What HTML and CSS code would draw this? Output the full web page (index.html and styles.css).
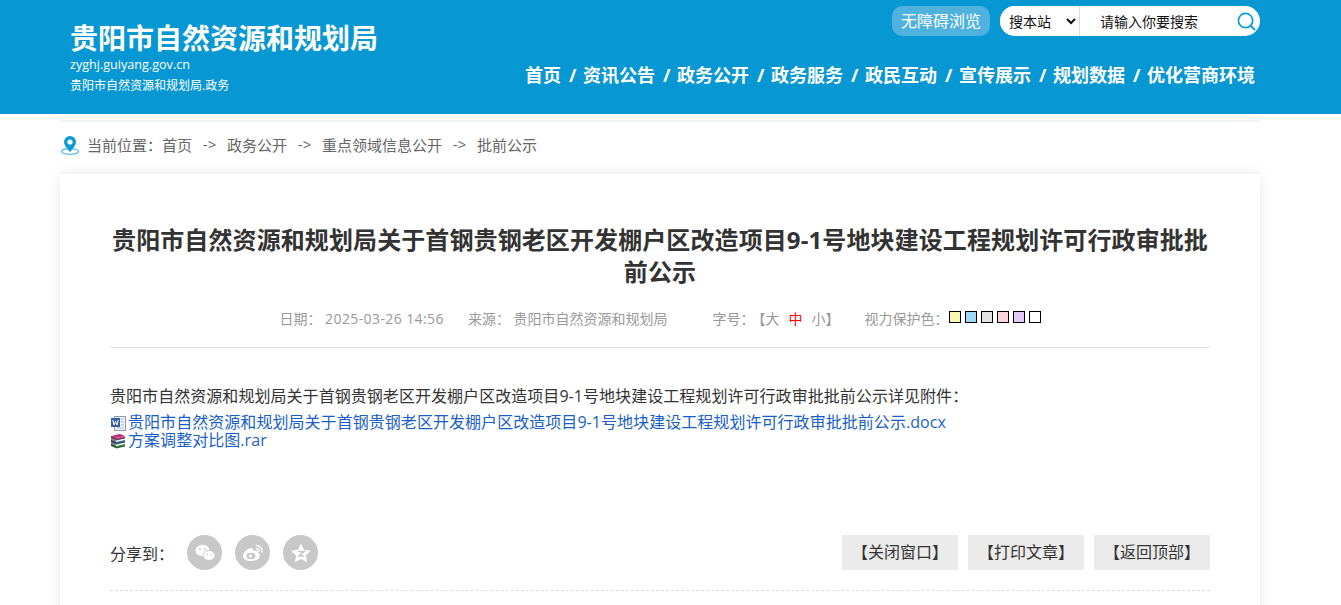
FILE: index.html
```html
<!DOCTYPE html>
<html lang="zh-CN">

<head>
    <meta charset="UTF-8">
    <title>贵阳市自然资源和规划局</title>
    <link rel="stylesheet" href="styles.css">
</head>

<body>

    <header class="top">
        <div class="top-inner">
            <div class="logo">
                <h1>贵阳市自然资源和规划局</h1>
                <p class="logo-url">zyghj.guiyang.gov.cn</p>
                <p class="logo-sub">贵阳市自然资源和规划局.政务</p>
            </div>
            <div class="top-right">
                <div class="tools">
                    <a class="access" href="#">无障碍浏览</a>
                    <form class="search">
                        <select class="search-scope">
                            <option>搜本站</option>
                        </select>
                        <input class="search-input" type="text" placeholder="请输入你要搜索">
                        <svg class="search-icon" viewBox="0 0 20 20" width="19" height="19">
                            <circle cx="9" cy="9" r="7.500" fill="none" stroke="#0a9bd8" stroke-width="1.800"/>
                            <path d="M14.500 14.500l4 4" stroke="#0a9bd8" stroke-width="2" stroke-linecap="round"/>
                        </svg>
                    </form>
                </div>
                <nav class="nav">
                    <a href="#">首页</a><span>/</span>
                    <a href="#">资讯公告</a><span>/</span>
                    <a href="#">政务公开</a><span>/</span>
                    <a href="#">政务服务</a><span>/</span>
                    <a href="#">政民互动</a><span>/</span>
                    <a href="#">宣传展示</a><span>/</span>
                    <a href="#">规划数据</a><span>/</span>
                    <a href="#">优化营商环境</a>
                </nav>
            </div>
        </div>
    </header>

    <div class="wrap">
        <div class="rules"></div>

        <div class="crumb">
            <svg class="crumb-pin" viewBox="0 0 20 20" width="20" height="20">
                <ellipse cx="10" cy="16.500" rx="8.500" ry="2.800" fill="none" stroke="#5bbce6" stroke-width="1.200"/>
                <path d="M10 1a6 6 0 0 0-6 6c0 3.800 6 10 6 10s6-6.200 6-10a6 6 0 0 0-6-6z" fill="#0a9bd8"/>
                <circle cx="10" cy="7" r="2.600" fill="#fff"/>
            </svg>
            <span>当前位置：</span>
            <a href="#">首页</a><i>-&gt;</i>
            <a href="#">政务公开</a><i>-&gt;</i>
            <a href="#">重点领域信息公开</a><i>-&gt;</i>
            <a href="#">批前公示</a>
        </div>

        <main class="card">
            <h2 class="title">贵阳市自然资源和规划局关于首钢贵钢老区开发棚户区改造项目9-1号地块建设工程规划许可行政审批批前公示</h2>

            <div class="meta">
                <span>日期：&nbsp;<span class="meta-time">2025-03-26 14:56</span></span>
                <span class="meta-from">来源：&nbsp;贵阳市自然资源和规划局</span>
                <span class="meta-size">字号：<em>【大</em><b>中</b>小】</span>
                <span class="meta-eye">视力保护色：</span>
                <span class="swatches">
                    <i class="sw-yellow"></i><i class="sw-blue"></i><i class="sw-grey"></i><i class="sw-pink"></i><i class="sw-purple"></i><i class="sw-white"></i>
                </span>
            </div>

            <div class="content">
                <p>贵阳市自然资源和规划局关于首钢贵钢老区开发棚户区改造项目9-1号地块建设工程规划许可行政审批批前公示详见附件：</p>
                <div class="files">
                    <a href="#">
                        <svg viewBox="0 0 16 16" width="16" height="16">
                            <rect x="4.500" y="1.500" width="11" height="14" fill="#f2f5fa" stroke="#8b9bb5"/>
                            <path d="M11 4h3M11 7h3M11 10h3M7 13h7" stroke="#a9b8d0"/>
                            <rect x="1" y="3" width="9" height="9" fill="#3a5fa8"/>
                            <path d="M2.800 5l1.200 5 1.500-3.500 1.500 3.500 1.200-5" fill="none" stroke="#fff"/>
                        </svg>贵阳市自然资源和规划局关于首钢贵钢老区开发棚户区改造项目9-1号地块建设工程规划许可行政审批批前公示.docx</a>
                    <a href="#">
                        <svg viewBox="0 0 16 16" width="16" height="16">
                            <path d="M1 3l9-2 5 2-9 2z" fill="#b8327c"/>
                            <path d="M1 3l5 2v2L1 5z" fill="#7c1f55"/>
                            <path d="M6 5l9-2v2L6 7z" fill="#d0458f"/>
                            <path d="M1 7l5 2 9-2v2l-9 2-5-2z" fill="#2f6fa8"/>
                            <path d="M1 11l5 2 9-2v2l-9 2-5-2z" fill="#2f9a4f"/>
                            <path d="M1 5l5 2v8l-5-2z" fill="#222" opacity=".55"/>
                            <path d="M6 7l9-2M6 11l9-2M6 15l9-2" stroke="#222" stroke-width=".8"/>
                        </svg>方案调整对比图.rar</a>
                </div>
            </div>

            <div class="share-row">
                <div class="share">
                    <span class="share-label">分享到：</span>
                    <a class="share-btn" href="#">
                        <svg viewBox="0 0 24 24" width="24" height="24">
                            <ellipse cx="9.500" cy="9.500" rx="7" ry="5.800" fill="#fff"/>
                            <ellipse cx="16" cy="14.500" rx="6" ry="5" fill="#fff" stroke="#c8c8c8"/>
                            <circle cx="7" cy="8" r="1" fill="#c8c8c8"/>
                            <circle cx="12" cy="8" r="1" fill="#c8c8c8"/>
                            <circle cx="14" cy="13.500" r=".8" fill="#c8c8c8"/>
                            <circle cx="18" cy="13.500" r=".8" fill="#c8c8c8"/>
                        </svg>
                    </a>
                    <a class="share-btn" href="#">
                        <svg viewBox="0 0 24 24" width="24" height="24">
                            <path d="M10 20c-4.400 0-8-2-8-5 0-3.500 5-8 8.500-8 1.500 0 2 1.200 1.500 3 3-1 5-.6 5 1 0 .5 0 1 0 1 1.500.5 2 1.500 2 2.500 0 3-4 5.500-9 5.500z" fill="#fff"/>
                            <ellipse cx="10" cy="15" rx="4.500" ry="3.200" fill="#c8c8c8"/>
                            <circle cx="9.500" cy="15" r="1.500" fill="#fff"/>
                            <path d="M15.500 4.500a5.500 5.500 0 0 1 5.500 6.500M15.500 7.500a2.500 2.500 0 0 1 2.500 3" fill="none" stroke="#fff" stroke-width="1.500" stroke-linecap="round"/>
                        </svg>
                    </a>
                    <a class="share-btn" href="#">
                        <svg viewBox="0 0 24 24" width="24" height="24">
                            <path d="M12 2.500l3 6.200 6.800 1-4.900 4.700 1.200 6.800-6.100-3.200-6.100 3.200 1.200-6.800-4.900-4.700 6.800-1z" fill="#fff"/>
                            <path d="M9 10.500h6l-5 4.500h5.500" fill="none" stroke="#c8c8c8" stroke-width="1.600"/>
                        </svg>
                    </a>
                </div>
                <div class="actions">
                    <a href="#">【关闭窗口】</a>
                    <a href="#">【打印文章】</a>
                    <a href="#">【返回顶部】</a>
                </div>
            </div>

            <div class="dash"></div>
        </main>
    </div>

</body>

</html>
```

FILE: styles.css
```css
* {
    box-sizing: border-box;
}

html,
body {
    height: 605px;
    overflow: hidden;
}

body {
    margin: 0;
    background-color: #fff;
    color: #333;
    font-family: "Open Sans", "Noto Sans CJK SC", sans-serif;
    font-size: 14px;
}

a {
    color: inherit;
    text-decoration: none;
}

/* 顶部 */
.top {
    height: 114px;
    background-color: #0797d2;
    color: #fff;
}

.top-inner {
    width: 1200px;
    margin: 0 60px;
    display: flex;
    justify-content: space-between;
}

.logo {
    padding: 20px 0 0 10px;
}

.logo h1 {
    margin: 0;
    font-size: 28px;
    line-height: 36px;
    font-weight: bold;
}

.logo-url {
    margin: 1px 0 0;
    font-size: 12.6px;
    line-height: 16px;
}

.logo-sub {
    margin: 4px 0 0;
    font-size: 12px;
    line-height: 18px;
}

.tools {
    display: flex;
    justify-content: flex-end;
    gap: 10px;
    padding-top: 6px;
}

.access {
    width: 98px;
    height: 30px;
    border-radius: 10px;
    background-color: #4fb1dd;
    font-size: 16px;
    line-height: 30px;
    text-align: center;
}

.search {
    width: 260px;
    height: 30px;
    border-radius: 15px;
    background-color: #fff;
    display: flex;
    align-items: center;
}

.search-scope {
    width: 80px;
    height: 30px;
    padding-left: 5px;
    border: none;
    border-right: 1px solid #ddd;
    border-radius: 15px 0 0 15px;
    background-color: #fff;
    color: #111;
    font-family: inherit;
    font-size: 14px;
}

.search-input {
    width: 150px;
    height: 30px;
    padding: 0 0 0 20px;
    border: none;
    outline: none;
    color: #111;
    font-family: inherit;
    font-size: 14px;
}

.search-input::placeholder {
    color: #111;
    opacity: 1;
}

.search-icon {
    margin-left: 7px;
}

.nav {
    display: flex;
    justify-content: flex-end;
    gap: 8px;
    padding: 24px 5px 0 0;
    font-size: 18px;
    line-height: 30px;
    font-weight: bold;
}

.nav span {
    width: 6px;
    text-align: center;
}

/* 面包屑 */
.wrap {
    width: 1200px;
    margin: 0 60px;
}

.rules {
    height: 5px;
    margin-top: 3px;
    border-top: 1px solid #f1f4f7;
    border-bottom: 2px solid #f1f4f7;
}

.crumb {
    display: flex;
    align-items: center;
    height: 46px;
    padding-bottom: 2px;
    color: #666;
    font-size: 15px;
}

.crumb-pin {
    margin: 2px 7px 0 0;
}

.crumb i {
    width: 15px;
    font-style: normal;
    text-align: center;
    margin: 0 10px;
}

/* 正文卡片 */
.card {
    margin-top: 6px;
    min-height: 600px;
    padding: 50px 50px 0;
    background-color: #fff;
    box-shadow: 0 0 12px rgba(0, 0, 0, .1);
}

.title {
    margin: 0;
    font-size: 24px;
    line-height: 32px;
    font-weight: bold;
    text-align: center;
    letter-spacing: .1px;
    color: #333;
}

.meta {
    display: flex;
    justify-content: center;
    align-items: center;
    height: 60px;
    border-bottom: 1px solid #ddd;
    color: #999;
}

.meta-time {
    letter-spacing: .4px;
}

.meta-from {
    margin-left: 24px;
}

.meta-size {
    margin-left: 45px;
}

.meta-size em {
    font-style: normal;
    margin-left: 4px;
}

.meta-size b {
    font-weight: normal;
    color: #f00;
    margin: 0 9px;
}

.meta-eye {
    margin-left: 25px;
}

.swatches {
    display: flex;
    gap: 4px;
    margin-bottom: 2px;
}

.swatches i {
    width: 12px;
    height: 12px;
    border: 1px solid #000;
}

.sw-yellow { background-color: #faf6b4; }
.sw-blue { background-color: #9fd9f6; }
.sw-grey { background-color: #e3e3e3; }
.sw-pink { background-color: #fad4dc; }
.sw-purple { background-color: #e4c9f6; }
.sw-white { background-color: #fff; }

.content {
    padding-top: 35px;
    height: 187px;
    font-size: 16px;
    letter-spacing: .05px;
    color: #333;
}

.content p {
    margin: 0 0 4px;
    line-height: 26px;
}

.files a {
    display: flex;
    align-items: center;
    height: 18px;
    line-height: 18px;
    color: #1a5fc8;
    white-space: nowrap;
}

.files svg {
    margin: 2px 2px 0 0;
}

.share-row {
    display: flex;
    justify-content: space-between;
    align-items: center;
    height: 35px;
}

.share {
    display: flex;
    align-items: center;
    gap: 13px;
}

.share-label {
    width: 64px;
    font-size: 16px;
}

.share-btn {
    width: 35px;
    height: 35px;
    border-radius: 50%;
    background-color: #c8c8c8;
    display: flex;
    align-items: center;
    justify-content: center;
}

.actions {
    display: flex;
    gap: 10px;
}

.actions a {
    width: 116px;
    height: 35px;
    background-color: #ebebeb;
    font-size: 16px;
    line-height: 35px;
    text-align: center;
}

.dash {
    margin-top: 20px;
    border-top: 1px dashed #ddd;
}
```
